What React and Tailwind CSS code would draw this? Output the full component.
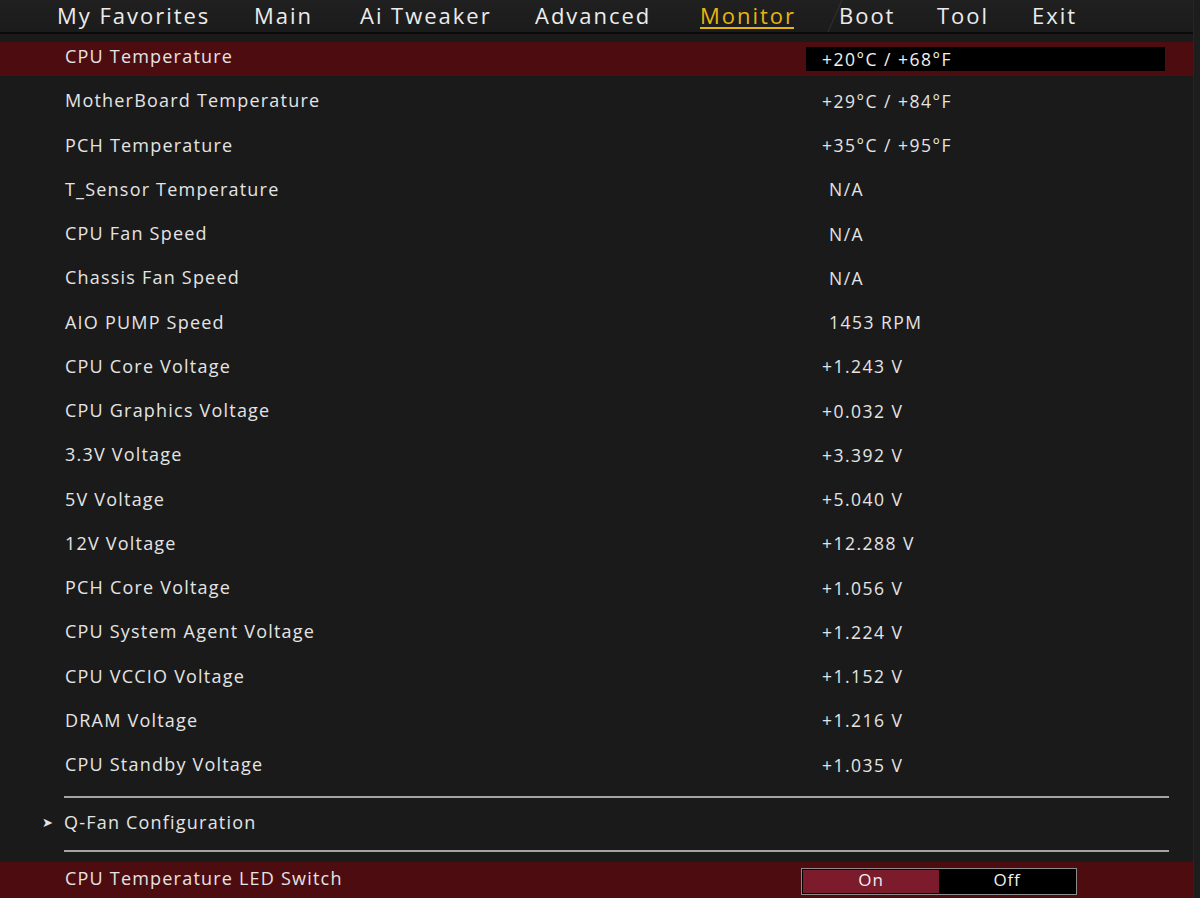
import React from "react";

const tabs = ["My Favorites", "Main", "Ai Tweaker", "Advanced", "Monitor", "Boot", "Tool", "Exit"];
const tabX = [57, 254, 360, 535, 700, 839, 937, 1032];

const rows = [
  ["CPU Temperature", "+20°C / +68°F"],
  ["MotherBoard Temperature", "+29°C / +84°F"],
  ["PCH Temperature", "+35°C / +95°F"],
  ["T_Sensor Temperature", "N/A", true],
  ["CPU Fan Speed", "N/A", true],
  ["Chassis Fan Speed", "N/A", true],
  ["AIO PUMP Speed", "1453 RPM", true],
  ["CPU Core Voltage", "+1.243 V"],
  ["CPU Graphics Voltage", "+0.032 V"],
  ["3.3V Voltage", "+3.392 V"],
  ["5V Voltage", "+5.040 V"],
  ["12V Voltage", "+12.288 V"],
  ["PCH Core Voltage", "+1.056 V"],
  ["CPU System Agent Voltage", "+1.224 V"],
  ["CPU VCCIO Voltage", "+1.152 V"],
  ["DRAM Voltage", "+1.216 V"],
  ["CPU Standby Voltage", "+1.035 V"],
];

const font = { fontFamily: '"Open Sans", "Noto Sans", sans-serif' };

function Row({ label, value, indent, selected }) {
  return (
    <div className="h-[44.25px] py-[5px]">
      <div className={`h-[34px] flex items-center pb-[4px] ${selected ? "bg-[#4d0d10]" : ""}`}>
        <div className="w-[806px] pl-[65px] text-[18px] font-medium tracking-[0.067em] text-[#e4e4e4]">{label}</div>
        {selected ? (
          <div className="w-[359px] h-[24px] mt-[4px] bg-black flex items-center pl-[16px] text-[17.5px] font-medium tracking-[0.085em] text-[#f0f0f0]">
            {value}
          </div>
        ) : (
          <div className={`${indent ? "pl-[23px]" : "pl-[16px]"} text-[17.5px] font-medium tracking-[0.085em] text-[#e4e4e4]`}>{value}</div>
        )}
      </div>
    </div>
  );
}

export default function App() {
  return (
    <div className="w-[1200px] h-[898px] overflow-hidden bg-[#1a1a1a] flex" style={font}>
      <div className="w-[1193px] flex flex-col">
        {/* top tabs */}
        <div className="relative h-[34px] bg-gradient-to-b from-[#202020] to-[#1b1b1b] border-b-2 border-[#0a0a0a]">
          <svg className="absolute left-[820px] top-0" width="30" height="32">
            <line x1="22" y1="0" x2="8" y2="32" stroke="#3a3030" strokeWidth="1" />
          </svg>
          {tabs.map((t, i) => (
            <div
              key={t}
              className={`absolute top-[1px] text-[22px] font-medium tracking-[0.09em] leading-[28px] ${
                t === "Monitor" ? "text-[#e6b512]" : "text-[#ececec]"
              }`}
              style={{ left: tabX[i] }}
            >
              {t}
              {t === "Monitor" && <div className="h-[2px] bg-[#e6b512] -mt-[2px] mr-[2px]" />}
            </div>
          ))}
        </div>

        <div className="pt-[3px]">
          {rows.map(([l, v, ind], i) => (
            <Row key={l} label={l} value={v} indent={ind} selected={i === 0} />
          ))}
        </div>

        <div className="mt-[7px] ml-[64px] w-[1105px] h-[2px] bg-[#a5a5a5]" />
        <div className="h-[53px] flex items-center pb-[3px]">
          <span className="w-[64px] pl-[42px] text-[13px] text-[#e4e4e4]">➤</span>
          <span className="text-[18px] font-medium tracking-[0.067em] text-[#e4e4e4]">Q-Fan Configuration</span>
        </div>
        <div className="ml-[64px] w-[1105px] h-[2px] bg-[#a5a5a5]" />

        <div className="mt-[10px] h-[36px] bg-[#4d0d10] flex items-center">
          <div className="w-[801px] pl-[65px] pb-[4px] text-[18px] font-medium tracking-[0.067em] text-[#e4e4e4]">CPU Temperature LED Switch</div>
          <div className="w-[276px] h-[27px] mt-[2px] border border-[#8c8c8c] bg-black p-px flex">
            <div className="w-[136px] pb-[3px] bg-[#7b1b2c] flex items-center justify-center text-[17px] font-medium tracking-[0.05em] text-[#f0f0f0]">On</div>
            <div className="flex-1 pb-[3px] flex items-center justify-center text-[17px] font-medium tracking-[0.05em] text-[#f0f0f0]">Off</div>
          </div>
        </div>
      </div>
      <div className="flex-1 bg-[#1d1d1d] border-l border-[#252525]" />
    </div>
  );
}
